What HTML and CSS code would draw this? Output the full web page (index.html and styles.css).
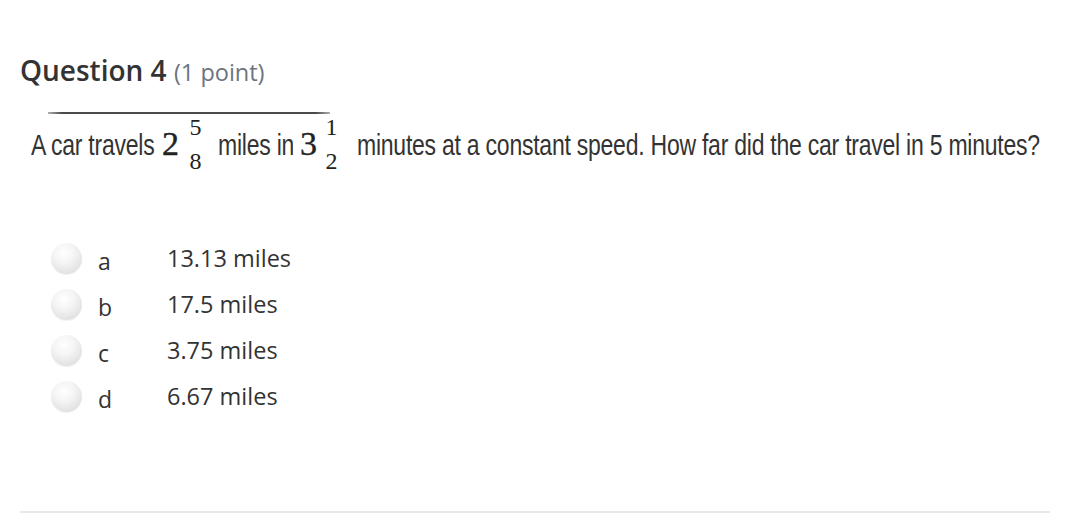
FILE: index.html
```html
<!DOCTYPE html>
<html>
<head>
<meta charset="utf-8">
<link rel="stylesheet" href="styles.css">
</head>
<body>
<div class="page">
  <h2 class="title">Question 4 <span class="pts">(1 point)</span></h2>
  <div class="rule"></div>
  <p class="question">
    <span class="seg seg-1"><span>A car travels</span></span>
    <span class="whole whole-1">2</span>
    <span class="frac frac-1"><span>5</span><span>8</span></span>
    <span class="seg seg-2"><span>miles in</span></span>
    <span class="whole whole-2">3</span>
    <span class="frac frac-2"><span>1</span><span>2</span></span>
    <span class="seg seg-3"><span>minutes at a constant speed. How far did the car travel in 5 minutes?</span></span>
  </p>
  <ul class="answers">
    <li class="answer"><span class="radio"></span><span class="letter">a</span><span class="text">13.13 miles</span></li>
    <li class="answer"><span class="radio"></span><span class="letter">b</span><span class="text">17.5 miles</span></li>
    <li class="answer"><span class="radio"></span><span class="letter">c</span><span class="text">3.75 miles</span></li>
    <li class="answer"><span class="radio"></span><span class="letter">d</span><span class="text">6.67 miles</span></li>
  </ul>
  <div class="bottom-rule"></div>
</div>
</body>
</html>
```

FILE: styles.css
```css
html, body {
  margin: 0;
  padding: 0;
  background: #ffffff;
}

.page {
  padding: 54px 20px 0 20px;
  font-family: "Open Sans", "Liberation Sans", sans-serif;
  color: #333333;
}

.title {
  margin: 0;
  font-size: 28px;
  line-height: 32px;
  font-weight: 600;
  color: #333333;
}

.pts {
  font-size: 23.5px;
  font-weight: 400;
  color: #6b7480;
}

.rule {
  margin: 24px 0 0 28px;
  width: 282px;
  height: 2px;
  background: linear-gradient(90deg, #b0b0b0 0%, #4a4a4a 5%, #4a4a4a 95%, #b0b0b0 100%);
}

.question {
  margin: 11px 0 0 11px;
  height: 56px;
  display: flex;
  align-items: baseline;
  color: #333333;
  white-space: nowrap;
}

.seg {
  display: block;
  font-family: "Liberation Sans", Arial, sans-serif;
  font-size: 29px;
  line-height: 40px;
  letter-spacing: -0.3px;
  overflow: hidden;
}

.seg > span {
  display: inline-block;
  transform: scaleX(0.793);
  transform-origin: left center;
}

.seg-1 { width: 124px; }
.seg-2 { width: 75px; margin-left: 17px; }
.seg-3 { width: 686px; margin-left: 20px; }

.whole {
  font-family: "Liberation Serif", "DejaVu Serif", serif;
  font-size: 34px;
  line-height: 34px;
  color: #222222;
  width: 16px;
  -webkit-text-stroke: 0.4px #222222;
}

.whole-1 { margin-left: 7px; }
.whole-2 { margin-left: 7px; }

.frac {
  display: flex;
  flex-direction: column;
  align-items: center;
  font-family: "Liberation Serif", "DejaVu Serif", serif;
  font-size: 24px;
  line-height: 34px;
  color: #222222;
  width: 11px;
  position: relative;
  top: -20px;
}

.frac > span {
  display: block;
}

.frac-1 { margin-left: 12px; }
.frac-2 { margin-left: 10px; }

.answers {
  list-style: none;
  margin: 61px 0 0 0;
  padding: 0 0 0 31px;
  display: flex;
  flex-direction: column;
  gap: 14px;
}

.answer {
  display: flex;
  align-items: center;
  height: 32px;
}

.radio {
  width: 31px;
  height: 31px;
  border-radius: 50%;
  background: radial-gradient(circle at 42% 32%, #ffffff 0%, #f5f5f5 35%, #e2e2e2 75%, #d4d4d4 100%);
  box-shadow: 0 1px 1px rgba(0, 0, 0, 0.06);
  flex: none;
}

.letter {
  width: 85px;
  padding-left: 16px;
  box-sizing: border-box;
  font-size: 23px;
  line-height: 32px;
  position: relative;
  top: 3px;
}

.text {
  font-size: 23.5px;
  line-height: 32px;
}

.bottom-rule {
  margin-top: 99px;
  height: 2px;
  background: #e8e8e8;
}
```
